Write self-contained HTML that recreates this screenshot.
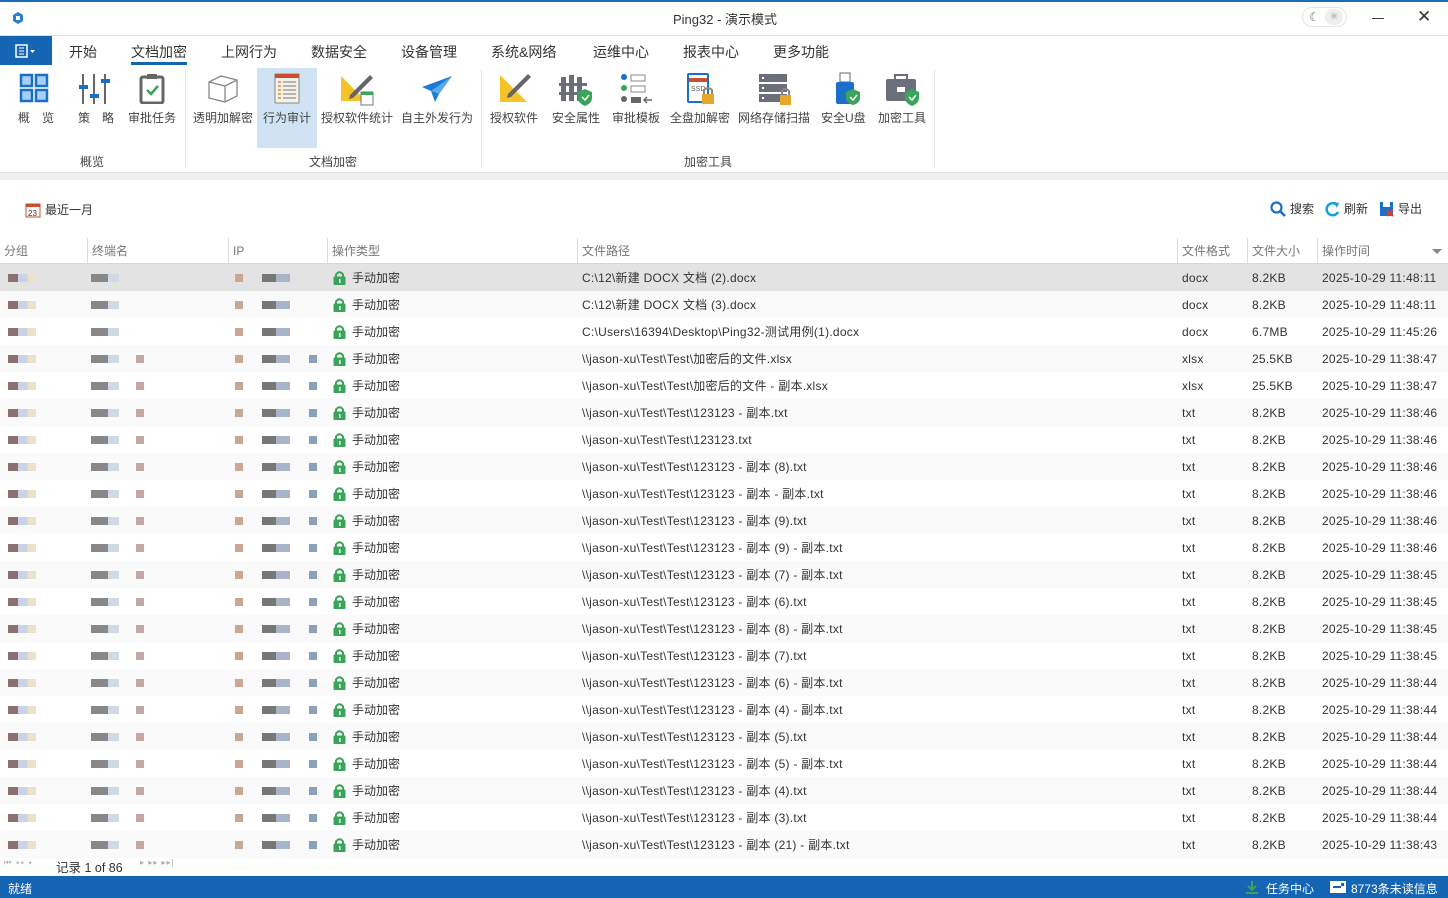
<!DOCTYPE html>
<html><head><meta charset="utf-8"><style>
*{margin:0;padding:0;box-sizing:border-box}
body{width:1448px;height:898px;overflow:hidden;background:#fff;font-family:"Liberation Sans","Noto Sans CJK SC",sans-serif;font-size:12px;color:#333;position:relative}
.a{position:absolute}
.tab{position:absolute;top:42px;font-size:14px;color:#333}
.rl{position:absolute;top:109px;font-size:12px;color:#444;white-space:nowrap;text-align:center}
.gl{position:absolute;top:153px;font-size:12px;color:#444}
.sep{position:absolute;top:70px;width:1px;height:98px;background:#e2e2e2}
.hd{position:absolute;top:238px;height:26px;border-bottom:1px solid #d8d8d8;width:1448px;background:#fff}
.hc{position:absolute;top:0;height:25px;line-height:26px;padding-left:4px;color:#777;border-left:1px solid #ddd;font-size:12px}
.row{position:absolute;left:0;width:1448px;height:27px;line-height:28px;font-size:12px;color:#333}
.row span{position:absolute;top:0;white-space:nowrap}
.row span.p{letter-spacing:0.25px}
.bl{position:absolute;top:10px;height:8px}
.lock{position:absolute;left:333px;top:6px;width:13px;height:15px}
</style></head><body>
<div class="a" style="left:0;top:0;width:1448px;height:2px;background:#1a6bb8"></div>
<svg class="a" style="left:11px;top:11px" width="14" height="14" viewBox="0 0 14 14"><path d="M7 1 L12 4 V10 L7 13 L2 10 V4Z" fill="#2a7fd4"/><path d="M5 5 H9 V9 H5Z" fill="#fff"/></svg>
<div class="a" style="left:673px;top:9px;font-size:13px;color:#333">Ping32 - 演示模式</div>
<div class="a" style="left:1302px;top:7px;width:45px;height:20px;border:1px solid #e4e4e4;border-radius:10px"></div>
<div class="a" style="left:1309px;top:10px;font-size:12px;color:#666">☾</div>
<div class="a" style="left:1325px;top:9px;width:18px;height:16px;background:#eee;border-radius:8px;font-size:11px;color:#aaa;text-align:center;line-height:16px">✳</div>
<div class="a" style="left:1372px;top:18px;width:12px;height:1px;background:#444"></div>
<div class="a" style="left:1417px;top:7px;font-size:17px;color:#333">✕</div>
<div class="a" style="left:0;top:35px;width:1448px;height:1px;background:#e0e0e0"></div>
<div class="a" style="left:0;top:36px;width:52px;height:29px;background:#1565b5"></div>
<svg class="a" style="left:15px;top:44px" width="22" height="14"><rect x="1" y="1" width="11" height="12" fill="none" stroke="#fff" stroke-width="1.5"/><path d="M4 4H9M4 7H9M4 10H9" stroke="#fff"/><path d="M15 6L17.5 9L20 6Z" fill="#fff"/></svg>
<div class="tab" style="left:69px">开始</div>
<div class="tab" style="left:131px">文档加密</div>
<div class="a" style="left:131px;top:62px;width:56px;height:3px;background:#1565b5"></div>
<div class="tab" style="left:221px">上网行为</div>
<div class="tab" style="left:311px">数据安全</div>
<div class="tab" style="left:401px">设备管理</div>
<div class="tab" style="left:491px">系统&amp;网络</div>
<div class="tab" style="left:593px">运维中心</div>
<div class="tab" style="left:683px">报表中心</div>
<div class="tab" style="left:773px">更多功能</div>
<div class="a" style="left:257px;top:68px;width:60px;height:80px;background:#cfe3f5"></div>
<svg class="a" style="left:19px;top:73px" width="31" height="31"><g fill="#a8d0f5" stroke="#1a70c8" stroke-width="2.5"><rect x="2" y="2" width="11" height="11"/><rect x="17" y="2" width="11" height="11"/><rect x="2" y="17" width="11" height="11"/><rect x="17" y="17" width="11" height="11"/></g></svg>
<svg class="a" style="left:78px;top:74px" width="32" height="30"><path d="M5 0V30M16 0V30M27 0V30" stroke="#666" stroke-width="2"/><rect x="1" y="11" width="9" height="4" fill="#1a70c8"/><rect x="12" y="20" width="9" height="4" fill="#1a70c8"/><rect x="23" y="5" width="9" height="4" fill="#1a70c8"/></svg>
<svg class="a" style="left:139px;top:73px" width="26" height="31"><rect x="2" y="4" width="22" height="26" fill="none" stroke="#666" stroke-width="3" rx="2"/><rect x="8" y="1" width="10" height="5" fill="#666"/><path d="M8 17L12 21L19 13" fill="none" stroke="#3aa55a" stroke-width="2.5"/></svg>
<svg class="a" style="left:207px;top:74px" width="32" height="30"><path d="M2 8L14 2L30 6V22L18 28L2 24Z M2 8L18 12L30 6 M18 12V28" fill="none" stroke="#888" stroke-width="1.3"/></svg>
<svg class="a" style="left:274px;top:73px" width="26" height="31"><rect x="1" y="1" width="24" height="29" fill="#f6f2ea" stroke="#888"/><rect x="1" y="1" width="24" height="4" fill="#c9502e"/><path d="M4 9H7M4 13H7M4 17H7M4 21H7M4 25H7" stroke="#d98a3a" stroke-width="1.5"/><path d="M9 9H22M9 13H22M9 17H22M9 21H22M9 25H22" stroke="#777"/></svg>
<svg class="a" style="left:340px;top:73px" width="34" height="33"><path d="M1 3V28H26Z" fill="#f5c22a"/><path d="M30 2L33 5L13 25L9 26L10 22Z" fill="#666"/><rect x="21" y="19" width="12" height="13" fill="#fff" stroke="#777"/><rect x="21" y="19" width="12" height="3" fill="#3aa55a"/></svg>
<svg class="a" style="left:421px;top:75px" width="32" height="28"><path d="M31 1L1 12L10 16L14 27L18 19L31 1Z" fill="#1a7bd8"/><path d="M10 16L31 1L18 19Z" fill="#5aa9ea"/></svg>
<svg class="a" style="left:499px;top:73px" width="32" height="31"><path d="M1 2V29H28Z" fill="#f5c22a"/><path d="M29 1L32 4L12 24L8 25L9 21Z" fill="#666"/></svg>
<svg class="a" style="left:559px;top:73px" width="34" height="33"><g fill="#6a6f7a"><rect x="2" y="4" width="5" height="24"/><rect x="10" y="2" width="5" height="26"/><rect x="18" y="4" width="5" height="24"/><rect x="0" y="10" width="28" height="3"/><rect x="0" y="19" width="28" height="3"/></g><path d="M26 16L33 19V25Q33 30 26 33Q19 30 19 25V19Z" fill="#3aa55a"/><path d="M23 24L26 27L30 22" stroke="#fff" fill="none" stroke-width="1.5"/></svg>
<svg class="a" style="left:619px;top:73px" width="34" height="31"><circle cx="5" cy="4" r="3" fill="#1a70c8"/><circle cx="5" cy="15" r="3" fill="#3aa55a"/><circle cx="5" cy="26" r="3" fill="#666"/><rect x="12" y="2" width="14" height="6" fill="none" stroke="#888"/><rect x="12" y="13" width="14" height="6" fill="none" stroke="#888"/><rect x="12" y="24" width="10" height="6" fill="#666"/><path d="M33 27H25M28 24L25 27L28 30" stroke="#666" fill="none" stroke-width="1.5"/></svg>
<svg class="a" style="left:686px;top:72px" width="30" height="34"><rect x="1" y="1" width="22" height="30" rx="2" fill="#1a70c8"/><rect x="3" y="3" width="18" height="26" fill="#fff"/><rect x="3" y="6" width="18" height="4" fill="#c9502e"/><text x="5" y="19" font-size="7" fill="#555" font-family="Liberation Sans">SSD</text><rect x="16" y="22" width="12" height="10" fill="#e6a82a"/><path d="M18 22V18Q22 14 26 18V22" stroke="#888" fill="none" stroke-width="2"/></svg>
<svg class="a" style="left:758px;top:73px" width="34" height="33"><rect x="1" y="1" width="28" height="8" fill="#6a6f7a"/><rect x="1" y="11" width="28" height="8" fill="#6a6f7a"/><rect x="1" y="21" width="28" height="8" fill="#6a6f7a"/><rect x="4" y="4" width="2" height="2" fill="#fff"/><rect x="4" y="14" width="2" height="2" fill="#fff"/><rect x="4" y="24" width="2" height="2" fill="#fff"/><rect x="22" y="22" width="11" height="10" fill="#e6a82a"/><path d="M24 22V18Q27.5 14 31 18V22" stroke="#888" fill="none" stroke-width="2"/></svg>
<svg class="a" style="left:833px;top:72px" width="28" height="34"><rect x="7" y="1" width="10" height="9" fill="#fff" stroke="#666"/><rect x="3" y="10" width="18" height="22" rx="2" fill="#1a70c8"/><path d="M20 17L27 20V26Q27 31 20 33Q13 31 13 26V20Z" fill="#3aa55a"/><path d="M17 25L20 28L24 23" stroke="#fff" fill="none" stroke-width="1.5"/></svg>
<svg class="a" style="left:885px;top:73px" width="34" height="33"><path d="M10 6V2H22V6" stroke="#6a6f7a" fill="none" stroke-width="2"/><rect x="1" y="6" width="30" height="22" rx="2" fill="#6a6f7a"/><rect x="12" y="14" width="8" height="5" fill="#fff"/><path d="M27 16L34 19V25Q34 30 27 33Q20 30 20 25V19Z" fill="#3aa55a"/><path d="M24 24L27 27L31 22" stroke="#fff" fill="none" stroke-width="1.5"/></svg>
<div class="rl" style="left:18px">概　览</div>
<div class="rl" style="left:78px">策　略</div>
<div class="rl" style="left:128px">审批任务</div>
<div class="rl" style="left:193px">透明加解密</div>
<div class="rl" style="left:263px">行为审计</div>
<div class="rl" style="left:321px">授权软件统计</div>
<div class="rl" style="left:401px">自主外发行为</div>
<div class="rl" style="left:490px">授权软件</div>
<div class="rl" style="left:552px">安全属性</div>
<div class="rl" style="left:612px">审批模板</div>
<div class="rl" style="left:670px">全盘加解密</div>
<div class="rl" style="left:738px">网络存储扫描</div>
<div class="rl" style="left:821px">安全U盘</div>
<div class="rl" style="left:878px">加密工具</div>
<div class="gl" style="left:80px">概览</div>
<div class="gl" style="left:309px">文档加密</div>
<div class="gl" style="left:684px">加密工具</div>
<div class="sep" style="left:185px"></div><div class="sep" style="left:481px"></div><div class="sep" style="left:934px"></div>
<div class="a" style="left:0;top:172px;width:1448px;height:8px;background:#f0f0f0;border-top:1px solid #e3e3e3"></div>
<svg class="a" style="left:25px;top:202px" width="16" height="16"><rect x="1" y="2" width="14" height="13" fill="#fff" stroke="#c9502e"/><rect x="1" y="2" width="14" height="3" fill="#c9502e"/><text x="3" y="14" font-size="8" fill="#333" font-family="Liberation Sans">23</text></svg>
<div class="a" style="left:45px;top:201px;font-size:12px">最近一月</div>
<svg class="a" style="left:1270px;top:201px" width="16" height="16"><circle cx="6.5" cy="6.5" r="5" fill="none" stroke="#1a70c8" stroke-width="2.2"/><path d="M10 10L15 15" stroke="#1a70c8" stroke-width="2.5"/></svg>
<div class="a" style="left:1290px;top:200px">搜索</div>
<svg class="a" style="left:1325px;top:201px" width="15" height="16"><path d="M12 4A6 6 0 1 0 13 11" fill="none" stroke="#1aa0d8" stroke-width="2.5"/><path d="M9 1L14 2L12 7Z" fill="#1aa0d8"/></svg>
<div class="a" style="left:1344px;top:200px">刷新</div>
<svg class="a" style="left:1379px;top:201px" width="16" height="16"><rect x="1" y="1" width="13" height="14" fill="#1a70c8"/><rect x="4" y="1" width="7" height="5" fill="#fff"/><path d="M8 9L14 15M14 9L8 15" stroke="#e0402a" stroke-width="2"/></svg>
<div class="a" style="left:1398px;top:200px">导出</div>
<div class="hd">
<div class="hc" style="left:0;border-left:none">分组</div>
<div class="hc" style="left:87px">终端名</div>
<div class="hc" style="left:228px">IP</div>
<div class="hc" style="left:327px">操作类型</div>
<div class="hc" style="left:577px">文件路径</div>
<div class="hc" style="left:1177px">文件格式</div>
<div class="hc" style="left:1247px">文件大小</div>
<div class="hc" style="left:1317px">操作时间</div>
<div class="a" style="left:1432px;top:11px;border:5px solid transparent;border-top:5px solid #888"></div>
</div>
<div id="rows"></div>
<div class="a" style="left:4px;top:858px;font-size:8px;color:#aaa;letter-spacing:1px">⏮ ◂◂ ◂</div>
<div class="a" style="left:56px;top:857px;font-size:12.5px;color:#333">记录 1 of 86</div>
<div class="a" style="left:140px;top:858px;font-size:8px;color:#aaa;letter-spacing:1px">▸ ▸▸ ▸▸|</div>
<div class="a" style="left:0;top:876px;width:1448px;height:22px;background:#1565b5"></div>
<div class="a" style="left:8px;top:880px;color:#fff;font-size:12px">就绪</div>
<svg class="a" style="left:1245px;top:880px" width="14" height="14"><path d="M7 1V9M3 6L7 10L11 6" stroke="#3aa55a" fill="none" stroke-width="2"/><path d="M1 13H13" stroke="#3aa55a" stroke-width="2"/></svg>
<div class="a" style="left:1266px;top:880px;color:#fff">任务中心</div>
<svg class="a" style="left:1330px;top:881px" width="16" height="12"><rect x="0" y="0" width="16" height="12" fill="#fff"/><path d="M3 6H11" stroke="#1565b5" stroke-width="2"/><rect x="11" y="2" width="3" height="3" fill="#1565b5"/></svg>
<div class="a" style="left:1351px;top:880px;color:#fff">8773条未读信息</div>
<script>
var d=[["C:\\12\\新建 DOCX 文档 (2).docx","docx","8.2KB","11:48:11"],["C:\\12\\新建 DOCX 文档 (3).docx","docx","8.2KB","11:48:11"],["C:\\Users\\16394\\Desktop\\Ping32-测试用例(1).docx","docx","6.7MB","11:45:26"],["\\\\jason-xu\\Test\\Test\\加密后的文件.xlsx","xlsx","25.5KB","11:38:47"],["\\\\jason-xu\\Test\\Test\\加密后的文件 - 副本.xlsx","xlsx","25.5KB","11:38:47"],["\\\\jason-xu\\Test\\Test\\123123 - 副本.txt","txt","8.2KB","11:38:46"],["\\\\jason-xu\\Test\\Test\\123123.txt","txt","8.2KB","11:38:46"],["\\\\jason-xu\\Test\\Test\\123123 - 副本 (8).txt","txt","8.2KB","11:38:46"],["\\\\jason-xu\\Test\\Test\\123123 - 副本 - 副本.txt","txt","8.2KB","11:38:46"],["\\\\jason-xu\\Test\\Test\\123123 - 副本 (9).txt","txt","8.2KB","11:38:46"],["\\\\jason-xu\\Test\\Test\\123123 - 副本 (9) - 副本.txt","txt","8.2KB","11:38:46"],["\\\\jason-xu\\Test\\Test\\123123 - 副本 (7) - 副本.txt","txt","8.2KB","11:38:45"],["\\\\jason-xu\\Test\\Test\\123123 - 副本 (6).txt","txt","8.2KB","11:38:45"],["\\\\jason-xu\\Test\\Test\\123123 - 副本 (8) - 副本.txt","txt","8.2KB","11:38:45"],["\\\\jason-xu\\Test\\Test\\123123 - 副本 (7).txt","txt","8.2KB","11:38:45"],["\\\\jason-xu\\Test\\Test\\123123 - 副本 (6) - 副本.txt","txt","8.2KB","11:38:44"],["\\\\jason-xu\\Test\\Test\\123123 - 副本 (4) - 副本.txt","txt","8.2KB","11:38:44"],["\\\\jason-xu\\Test\\Test\\123123 - 副本 (5).txt","txt","8.2KB","11:38:44"],["\\\\jason-xu\\Test\\Test\\123123 - 副本 (5) - 副本.txt","txt","8.2KB","11:38:44"],["\\\\jason-xu\\Test\\Test\\123123 - 副本 (4).txt","txt","8.2KB","11:38:44"],["\\\\jason-xu\\Test\\Test\\123123 - 副本 (3).txt","txt","8.2KB","11:38:44"],["\\\\jason-xu\\Test\\Test\\123123 - 副本 (21) - 副本.txt","txt","8.2KB","11:38:43"]];
var h="";
d.forEach(function(r,i){
var bg=i==0?"#e3e3e3":(i%2?"#fafafa":"#fff");
h+='<div class="row" style="top:'+(264+27*i)+'px;background:'+bg+'">'+
'<div class="bl" style="left:8px;width:28px;background:linear-gradient(90deg,#8a7070 0 35%,#c8d4e6 35% 70%,#ece2cc 70%)"></div>'+
'<div class="bl" style="left:91px;width:28px;background:linear-gradient(90deg,#888 0 60%,#d0dae6 60%)"></div>'+
(i>2?'<div class="bl" style="left:136px;width:8px;background:#c4a8a8"></div>':'')+
'<div class="bl" style="left:235px;width:8px;background:#c8a890"></div>'+
'<div class="bl" style="left:262px;width:28px;background:linear-gradient(90deg,#777 0 50%,#a8b4c8 50%)"></div>'+
(i>2?'<div class="bl" style="left:309px;width:8px;background:#8aa0bc"></div>':'')+
'<svg class="lock" viewBox="0 0 13 15"><path d="M3 7V4.5Q6.5 0 10 4.5V7" stroke="#3aa55a" stroke-width="2" fill="none"/><rect x="0.5" y="6.5" width="12" height="8.5" rx="1" fill="#3aa55a"/><rect x="6" y="9" width="1.5" height="4" fill="#fff"/></svg>'+
'<span style="left:352px">手动加密</span><span class="p" style="left:582px">'+r[0]+'</span><span class="p" style="left:1182px">'+r[1]+'</span><span class="p" style="left:1252px">'+r[2]+'</span><span class="p" style="left:1322px">2025-10-29 '+r[3]+'</span></div>';
});
document.getElementById("rows").innerHTML=h;
</script>
</body></html>
